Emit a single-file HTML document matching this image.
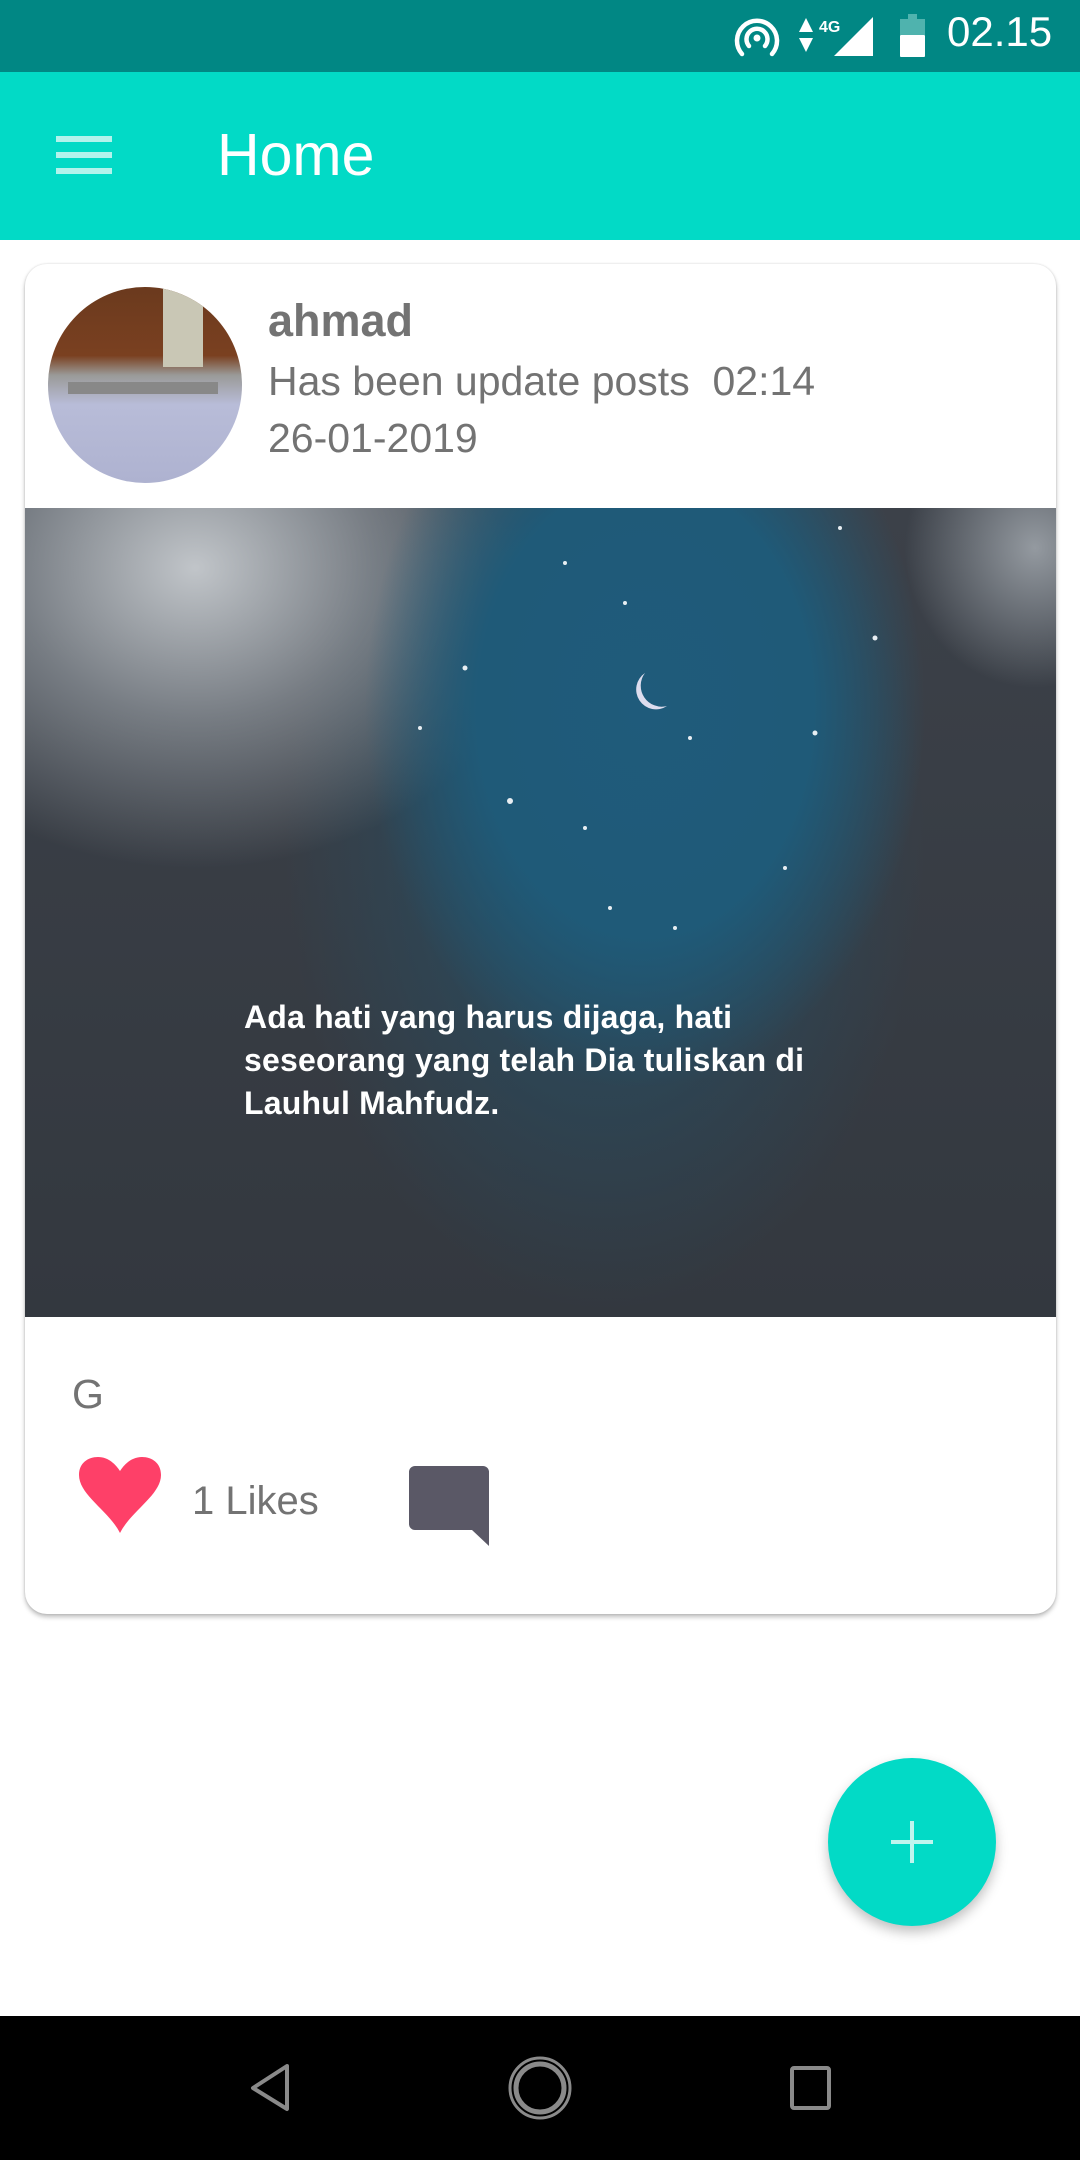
<!DOCTYPE html>
<html><head><meta charset="utf-8"><style>
*{margin:0;padding:0;box-sizing:border-box}
body{width:1080px;height:2160px;background:#fff;position:relative;overflow:hidden;font-family:"Liberation Sans",sans-serif}
.abs{position:absolute}
</style></head><body>
<div class="abs" style="left:0;top:0;width:1080px;height:72px;background:#018784"></div>
<svg class="abs" style="left:720px;top:0" width="360" height="72" viewBox="720 0 360 72">
<g fill="none" stroke="#fff" stroke-width="4.5" stroke-linecap="round">
<path d="M742 54 A20 20 0 1 1 772 54"/><path d="M749 46 A10.5 10.5 0 1 1 765 46"/></g>
<circle cx="757" cy="38" r="3.5" fill="#fff"/>
<path d="M799 32 L806 18 L813 32Z M799 38 L813 38 L806 52Z" fill="#fff"/>
<text x="819" y="32" font-size="16" font-weight="bold" fill="#fff" font-family="Liberation Sans">4G</text>
<path d="M834 56 L873 17 L873 56Z" fill="#fff"/>
<rect x="908" y="14" width="9" height="6" fill="#4fb3ae"/>
<rect x="900" y="19" width="25" height="16" fill="#4fb3ae"/>
<rect x="900" y="35" width="25" height="22" rx="1" fill="#fff"/>
</svg>
<div class="abs" style="left:947px;top:7px;font-size:42px;color:#fff;line-height:50px">02.15</div>

<div class="abs" style="left:0;top:72px;width:1080px;height:168px;background:#02dac6"></div>
<div class="abs" style="left:56px;top:136px;width:56px;height:6px;background:#b3f3ec"></div>
<div class="abs" style="left:56px;top:152px;width:56px;height:6px;background:#b3f3ec"></div>
<div class="abs" style="left:56px;top:168px;width:56px;height:6px;background:#b3f3ec"></div>
<div class="abs" style="left:217px;top:122px;font-size:59px;color:#fff;line-height:66px">Home</div>

<div class="abs" style="left:25px;top:264px;width:1031px;height:1350px;background:#fff;border-radius:22px;box-shadow:0 3px 5px rgba(0,0,0,.25),0 0 2px rgba(0,0,0,.15);overflow:hidden">
  <div class="abs" style="left:0;top:244px;width:1031px;height:809px;background:
   radial-gradient(ellipse 280px 380px at 620px 200px,#1f5b7b 0%,#1f5a78 60%,rgba(31,90,120,0) 100%),
   radial-gradient(ellipse 360px 300px at 170px 60px,rgba(200,204,208,.95) 0%,rgba(160,166,172,.6) 50%,rgba(80,86,96,0) 100%),
   radial-gradient(ellipse 130px 140px at 1010px 40px,rgba(170,176,182,.8) 0%,rgba(80,86,96,0) 100%),
   radial-gradient(ellipse 320px 470px at 580px 330px,#244f66 0%,rgba(40,70,90,0) 100%),
   linear-gradient(#3c4149,#33383f)"></div>
  <svg class="abs" style="left:0;top:244px" width="1031" height="809">
   <g fill="#e8eef2"><circle cx="540" cy="55" r="2"/><circle cx="600" cy="95" r="2"/><circle cx="440" cy="160" r="2.5"/><circle cx="850" cy="130" r="2.5"/><circle cx="790" cy="225" r="2.5"/><circle cx="665" cy="230" r="2"/><circle cx="485" cy="293" r="3"/><circle cx="560" cy="320" r="2"/><circle cx="585" cy="400" r="2"/><circle cx="815" cy="20" r="2"/><circle cx="395" cy="220" r="2"/><circle cx="760" cy="360" r="2"/><circle cx="650" cy="420" r="2"/></g>
   <path d="M620 165 A17 17 0 0 0 642 198 A21 21 0 0 1 620 165Z" fill="#dde"/>
  </svg>
  <div class="abs" style="left:219px;top:732px;font-size:32px;font-weight:bold;color:#fff;line-height:43px;letter-spacing:0.2px">Ada hati yang harus dijaga, hati<br>seseorang yang telah Dia tuliskan di<br>Lauhul Mahfudz.</div>

  <div class="abs" style="left:23px;top:23px;width:194px;height:196px;border-radius:50%;overflow:hidden;background:linear-gradient(#6b3a1e 0%,#7a4020 35%,#9a9a98 45%,#b8bcd8 60%,#aeb2d0 100%)">
    <div class="abs" style="left:115px;top:0;width:40px;height:80px;background:#c9c7b5"></div>
    <div class="abs" style="left:20px;top:95px;width:150px;height:12px;background:#888"></div>
  </div>
  <div class="abs" style="left:243px;top:30px;font-size:45px;font-weight:bold;color:#737373;line-height:54px">ahmad</div>
  <div class="abs" style="left:243px;top:94px;font-size:41px;color:#737373;line-height:46px;white-space:pre">Has been update posts  02:14</div>
  <div class="abs" style="left:243px;top:151px;font-size:41px;color:#737373;line-height:46px">26-01-2019</div>

  <div class="abs" style="left:47px;top:1107px;font-size:41px;color:#737373;line-height:46px">G</div>
  <svg class="abs" style="left:54px;top:1193px" width="82" height="76" viewBox="0 0 82 76">
   <path d="M41 76 C30 54 0 38 0 18 C0 6 9 0 19 0 C30 0 37 8 41 14 C45 8 52 0 63 0 C73 0 82 6 82 18 C82 38 52 54 41 76Z" fill="#fe4068"/>
  </svg>
  <div class="abs" style="left:167px;top:1214px;font-size:40px;color:#737373;line-height:46px">1 Likes</div>
  <svg class="abs" style="left:384px;top:1202px" width="80" height="80" viewBox="0 0 80 80">
   <path d="M6 0 H74 A6 6 0 0 1 80 6 V80 L63 64 H6 A6 6 0 0 1 0 58 V6 A6 6 0 0 1 6 0Z" fill="#5a5866"/>
  </svg>
</div>

<div class="abs" style="left:828px;top:1758px;width:168px;height:168px;border-radius:50%;background:#02dac6;box-shadow:0 6px 12px rgba(0,0,0,.25)"></div>
<div class="abs" style="left:891px;top:1840px;width:42px;height:4px;background:#c0f5ee"></div>
<div class="abs" style="left:910px;top:1821px;width:4px;height:42px;background:#c0f5ee"></div>

<div class="abs" style="left:0;top:2016px;width:1080px;height:144px;background:#000"></div>
<svg class="abs" style="left:0;top:2016px" width="1080" height="144">
 <path d="M287 50 L253 72 L287 93Z" fill="none" stroke="#8a8a8a" stroke-width="4" stroke-linejoin="round"/>
 <circle cx="540" cy="72" r="30" fill="none" stroke="#8a8a8a" stroke-width="3"/>
 <circle cx="540" cy="72" r="24" fill="none" stroke="#8a8a8a" stroke-width="5"/>
 <rect x="792" y="52" width="37" height="40" rx="2" fill="none" stroke="#8a8a8a" stroke-width="4"/>
</svg>
</body></html>
